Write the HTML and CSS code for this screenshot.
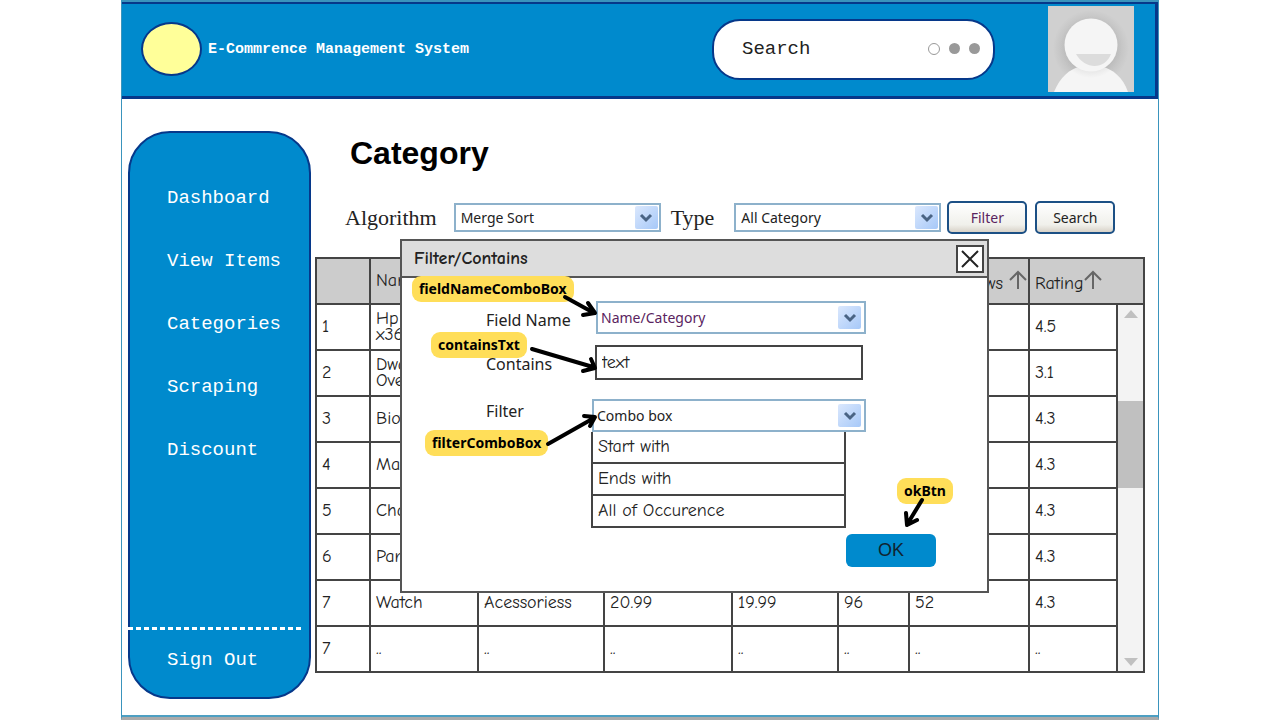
FILE: index.html
```html
<!DOCTYPE html>
<html lang="en">
<head>
<meta charset="utf-8">
<title>E-Commrence Management System</title>
<link rel="stylesheet" href="styles.css">
</head>
<body>
<div class="app">
  <header class="header">
    <span class="logo"></span>
    <span class="brand">E-Commrence Management System</span>
    <div class="search">
      <input class="search-input" type="search" placeholder="Search" aria-label="Search">
      <span class="dots"><i class="dot dot-open"></i><i class="dot"></i><i class="dot"></i></span>
    </div>
    <svg class="avatar" viewBox="0 0 86 86" role="img" aria-label="User">
      <defs>
        <radialGradient id="shade"><stop offset="0.65" stop-color="#b2b2b2"/><stop offset="1" stop-color="#b2b2b2" stop-opacity="0"/></radialGradient>
        <clipPath id="frame"><rect width="86" height="86"/></clipPath>
      </defs>
      <g clip-path="url(#frame)">
        <rect width="86" height="86" fill="#d0d0d0"/>
        <circle cx="43" cy="42" r="38" fill="url(#shade)" opacity=".6"/>
        <path d="M6 86C12 71 22 63 31 61H55C64 63 75 71 80 86Z" fill="#f5f5f5"/>
        <circle cx="43" cy="41" r="31" fill="url(#shade)" opacity=".3"/>
        <circle cx="43" cy="39" r="26.500" fill="#f5f5f5"/>
        <path d="M28 48H63C57 64 37 64 28 48Z" fill="#dcdcdc"/>
      </g>
    </svg>
  </header>

  <div class="body">
    <nav class="sidebar">
      <div class="nav-links">
        <a class="nav-link" href="#">Dashboard</a>
        <a class="nav-link" href="#">View Items</a>
        <a class="nav-link" href="#">Categories</a>
        <a class="nav-link" href="#">Scraping</a>
        <a class="nav-link" href="#">Discount</a>
      </div>
      <div class="sign-out"><a class="nav-link" href="#">Sign Out</a></div>
    </nav>

    <main class="main">
      <h1 class="title">Category</h1>
      <div class="toolbar">
        <label class="tool-label" for="algorithm">Algorithm</label>
        <div class="combo tool-combo">
          <select id="algorithm"><option>Merge Sort</option></select>
          <span class="combo-arrow"><svg viewBox="0 0 14 10"><path d="M2 2l5 5 5-5"/></svg></span>
        </div>
        <label class="tool-label type-label" for="type">Type</label>
        <div class="combo tool-combo">
          <select id="type"><option>All Category</option></select>
          <span class="combo-arrow"><svg viewBox="0 0 14 10"><path d="M2 2l5 5 5-5"/></svg></span>
        </div>
        <button class="btn btn-filter" type="button">Filter</button>
        <button class="btn" type="button">Search</button>
      </div>

      <table class="items">
        <colgroup><col class="c-no"><col class="c-name"><col class="c-cat"><col class="c-price"><col class="c-sale"><col class="c-qty"><col class="c-reviews"><col class="c-rating"><col class="c-scroll"></colgroup>
        <thead>
          <tr><th></th><th>Name</th><th></th><th></th><th></th><th></th>
          <th class="th-reviews">Reviews <svg class="sort" viewBox="0 0 18 20"><path d="M9 19V2M1 10l8-8 8 8"/></svg></th>
          <th colspan="2">Rating<svg class="sort" viewBox="0 0 18 20"><path d="M9 19V2M1 10l8-8 8 8"/></svg></th></tr>
        </thead>
        <tbody>
          <tr><td>1</td><td>Hp<br>x360</td><td></td><td></td><td></td><td></td><td></td><td>4.5</td>
            <td class="scroll" rowspan="8"><div class="track"><i class="up"></i><i class="thumb"></i><i class="down"></i></div></td></tr>
          <tr><td>2</td><td>Dwarf<br>Over</td><td></td><td></td><td></td><td></td><td></td><td>3.1</td></tr>
          <tr><td>3</td><td>Biotin</td><td></td><td></td><td></td><td></td><td></td><td>4.3</td></tr>
          <tr><td>4</td><td>Maxi</td><td></td><td></td><td></td><td></td><td></td><td>4.3</td></tr>
          <tr><td>5</td><td>Chair</td><td></td><td></td><td></td><td></td><td></td><td>4.3</td></tr>
          <tr><td>6</td><td>Pants</td><td></td><td></td><td></td><td></td><td></td><td>4.3</td></tr>
          <tr><td>7</td><td>Watch</td><td>Acessoriess</td><td>20.99</td><td>19.99</td><td>96</td><td>52</td><td>4.3</td></tr>
          <tr><td>7</td><td>..</td><td>..</td><td>..</td><td>..</td><td>..</td><td>..</td><td>..</td></tr>
        </tbody>
      </table>

      <section class="dialog" role="dialog" aria-labelledby="dialog-title">
        <header class="dialog-bar">
          <h2 class="dialog-title" id="dialog-title">Filter/Contains</h2>
          <button class="close" type="button" aria-label="Close"><svg viewBox="0 0 20 20"><path d="M2 2l16 16M18 2L2 18"/></svg></button>
        </header>
        <form class="form">
          <label class="form-label" for="field">Field Name</label>
          <div class="combo combo-field">
            <select id="field"><option>Name/Category</option></select>
            <span class="combo-arrow"><svg viewBox="0 0 14 10"><path d="M2 2l5 5 5-5"/></svg></span>
          </div>
          <label class="form-label contains-label" for="contains">Contains</label>
          <input class="text-field" id="contains" type="text" value="text">
          <label class="form-label filter-label" for="match">Filter</label>
          <div class="match">
            <div class="combo">
              <select id="match"><option>Combo box</option></select>
              <span class="combo-arrow"><svg viewBox="0 0 14 10"><path d="M2 2l5 5 5-5"/></svg></span>
            </div>
            <ul class="options" role="listbox" aria-label="Filter">
              <li role="option">Start with</li>
              <li role="option">Ends with</li>
              <li role="option">All of Occurence</li>
            </ul>
          </div>
          <button class="ok" type="button">OK</button>
        </form>
        <span class="note note-field">fieldNameComboBox</span>
        <span class="note note-contains">containsTxt</span>
        <span class="note note-filter">filterComboBox</span>
        <span class="note note-ok">okBtn</span>
        <svg class="arrows" viewBox="0 0 588 352">
          <path d="M164 57L193 73M187 63L194 73L182 75"/>
          <path d="M131 109L192 127M190 119L194 128L182 131"/>
          <path d="M147 204L193 178M183 176L194 177L189 186"/>
          <path d="M521 260L507 283M505 273L506 285L516 280"/>
        </svg>
      </section>
    </main>
  </div>
</div>
</body>
</html>
```
FILE: styles.css
```css
* { box-sizing: border-box; }

body {
  margin: 0;
  background: #fff;
  color: #222;
  font-family: "Noto Sans", sans-serif;
}

.app {
  display: flex;
  flex-direction: column;
  max-width: 1038px;
  min-height: 100vh;
  margin: 0 auto;
  border: 1px solid #3a94bd;
  border-top-width: 2px;
  border-bottom: 3px solid #aaa;
  box-shadow: inset 0 -2px #4d9fc2;
}

.header {
  display: flex;
  align-items: center;
  padding: 2px 21px 4px 19px;
  background: #008acd;
  border: solid #06388a;
  border-width: 2px 3px 3px 0;
}

.logo {
  width: 61px;
  height: 54px;
  margin-right: 6px;
  background: #ffff99;
  border: 2px solid #06388a;
  border-radius: 50%;
}

.brand {
  flex: 1;
  color: #fff;
  font: bold 15px "Liberation Mono", monospace;
}

.search {
  display: flex;
  align-items: center;
  width: 283px;
  height: 61px;
  margin-right: 53px;
  padding: 0 13px 0 28px;
  background: #fff;
  border: 2px solid #06388a;
  border-radius: 28px;
}

.search-input {
  flex: 1;
  min-width: 0;
  padding: 0;
  border: 0;
  background: none;
  font: 19px "Liberation Mono", monospace;
}

.search-input::placeholder { color: #222; }

.dots { display: flex; gap: 9px; }

.dot {
  width: 11px;
  height: 11px;
  background: #999;
  border-radius: 50%;
}

.dot-open {
  width: 12px;
  height: 12px;
  background: #fff;
  border: 1px solid #999;
}

.avatar { width: 86px; height: 86px; }

.body { display: flex; flex: 1; }

.sidebar {
  display: flex;
  flex-direction: column;
  flex: none;
  width: 183px;
  margin: 32px 4px 18px 6px;
  background: #008acd;
  border: 2px solid #06388a;
  border-radius: 42px;
}

.nav-links {
  display: flex;
  flex: 1;
  flex-direction: column;
  gap: 41px;
  padding: 54px 0 0 37px;
}

.nav-link {
  color: #fff;
  font: 19px/22px "Liberation Mono", monospace;
  text-decoration: none;
}

.sign-out {
  margin-left: -2px;
  padding: 21px 0 26px 39px;
  background: repeating-linear-gradient(90deg, #fff 0 5px, transparent 5px 8px) 0 0 / 175px 3px no-repeat;
}

.main {
  position: relative;
  flex: 1;
  min-width: 0;
  padding: 34px 13px 0 0;
}

.title {
  margin: 0 0 28px 35px;
  color: #000;
  font: bold 32px/40px "Liberation Sans", sans-serif;
}

.toolbar {
  display: flex;
  align-items: center;
  margin: 0 0 23px 30px;
}

.tool-label {
  margin-right: 17px;
  font: 22px/32px "Liberation Serif", serif;
}

.type-label { margin: 0 20px 0 10px; }

.combo {
  display: flex;
  align-items: center;
  height: 33px;
  padding: 3px;
  background: #fff;
  border: 2px solid #8db1cb;
}

.combo select {
  flex: 1;
  min-width: 0;
  padding: 0;
  border: 0;
  background: none;
  color: #222;
  font: 14px/20px "Noto Sans", sans-serif;
  appearance: none;
}

.combo-arrow {
  display: flex;
  align-items: center;
  justify-content: center;
  align-self: stretch;
  width: 23px;
  background: linear-gradient(135deg, #dbe8fd, #a6c8f8);
  border-radius: 2px;
}

.combo-arrow svg {
  width: 14px;
  height: 10px;
  fill: none;
  stroke: #4a6484;
  stroke-width: 3;
}

.tool-combo {
  width: 207px;
  height: 29px;
  padding: 1px 1px 1px 5px;
}

.btn {
  width: 80px;
  height: 33px;
  margin-left: 8px;
  padding: 0;
  background: linear-gradient(#fff, #f0f0eb 75%, #d8d2c8);
  border: 2px solid #1c5085;
  border-radius: 5px;
  color: #222;
  font: 14px "Noto Sans", sans-serif;
}

.btn-filter { margin-left: 6px; color: #5a2460; }

.items {
  width: 100%;
  table-layout: fixed;
  border-collapse: collapse;
  color: #222;
  font: 18px/16px "Comic Sans MS", "Comic Neue", "Noto Sans", sans-serif;
}

.c-no { width: 54px; }
.c-name { width: 108px; }
.c-cat { width: 126px; }
.c-price { width: 128px; }
.c-sale { width: 106px; }
.c-qty { width: 71px; }
.c-reviews { width: 120px; }
.c-rating { width: 88px; }

.items tr { height: 46px; }

.items th,
.items td {
  padding: 0 5px;
  border: 2px solid #444;
  text-align: left;
  font-weight: normal;
}

.items th { background: #ccc; white-space: nowrap; }

.items .th-reviews { padding-right: 1px; text-align: right; }

.sort {
  width: 18px;
  height: 20px;
  vertical-align: -1px;
  fill: none;
  stroke: #666;
  stroke-width: 2;
}

.items .scroll { height: 1px; padding: 0; }

.track {
  display: flex;
  flex-direction: column;
  align-items: center;
  height: 366px;
  padding: 5px 0;
  background: #f3f3f3;
}

.up,
.down {
  border: 7px solid transparent;
  border-top-width: 0;
  border-bottom: 8px solid #c0c0c0;
}

.down { margin-top: auto; transform: rotate(180deg); }

.thumb {
  width: 100%;
  height: 87px;
  margin-top: 83px;
  background: #c0c0c0;
}

.dialog {
  position: absolute;
  top: 140px;
  left: 85px;
  width: 589px;
  background: #fff;
  border: 2px solid #555;
}

.dialog-bar {
  display: flex;
  align-items: center;
  justify-content: space-between;
  height: 37px;
  padding: 0 3px 0 12px;
  background: #ddd;
  border-bottom: 2px solid #555;
}

.dialog-title {
  margin: 0;
  font: bold 18px "Comic Sans MS", "Comic Neue", "Noto Sans", sans-serif;
}

.close {
  width: 28px;
  height: 28px;
  padding: 2px;
  background: #fff;
  border: 2px solid #444;
}

.close svg {
  display: block;
  width: 20px;
  height: 20px;
  fill: none;
  stroke: #222;
  stroke-width: 2;
}

.form {
  display: grid;
  grid-template-columns: 101px 275px;
  column-gap: 4px;
  align-items: start;
  justify-content: start;
  padding: 23px 0 24px 84px;
}

.form-label { padding-top: 6px; font-size: 16px; line-height: 26px; }

.contains-label { padding-top: 17px; }

.filter-label { padding-top: 18px; }

.combo-field { margin-left: 5px; }

.combo-field select { color: #5a2460; }

.text-field {
  width: 268px;
  height: 35px;
  margin: 11px 0 0 4px;
  padding: 0 5px;
  border: 2px solid #444;
  color: #222;
  font: 18px "Comic Sans MS", "Comic Neue", "Noto Sans", sans-serif;
}

.match { margin-top: 19px; }

.match .combo { margin-left: 1px; }

.options {
  width: 255px;
  margin: 0;
  padding: 0;
  list-style: none;
  border: solid #444;
  border-width: 0 2px;
  font: 18px/30px "Comic Sans MS", "Comic Neue", "Noto Sans", sans-serif;
}

.options li { padding-left: 5px; border-bottom: 2px solid #444; }

.ok {
  grid-column: 2;
  justify-self: end;
  width: 90px;
  height: 33px;
  margin: 6px -70px 0 0;
  background: #008acd;
  border: 0;
  border-radius: 6px;
  color: #102430;
  font: 18px "Liberation Sans", sans-serif;
}

/* Callouts sit over the dialog and point at its controls. */
.note {
  position: absolute;
  padding: 0 7px;
  background: #ffde59;
  border-radius: 9px;
  color: #000;
  font: bold 14px/26px "Noto Sans", sans-serif;
}

.note-field { top: 35px; left: 10px; }
.note-contains { top: 91px; left: 29px; }
.note-filter { top: 189px; left: 23px; }
.note-ok { top: 237px; left: 495px; }

.arrows {
  position: absolute;
  top: -1px;
  left: -1px;
  width: 588px;
  height: 352px;
  fill: none;
  stroke: #000;
  stroke-width: 4;
  stroke-linecap: round;
  stroke-linejoin: round;
  pointer-events: none;
}
```
